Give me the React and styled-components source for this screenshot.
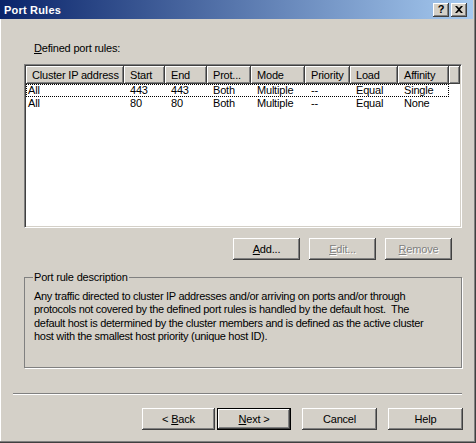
import React from 'react';
import styled, { createGlobalStyle } from 'styled-components';

const GlobalStyle = createGlobalStyle`
  html, body {
    margin: 0;
    padding: 0;
    background: #d4d0c8;
  }
  body {
    font-family: "Liberation Sans", Arial, sans-serif;
    font-size: 11px;
    color: #000;
  }
`;

// Window chrome
const Window = styled.div`
  width: 476px;
  height: 443px;
  box-sizing: border-box;
  padding: 0 3px 2px 0;
  background: #d4d0c8;
  box-shadow: inset -1px -1px #404040, inset -2px -2px #808080, inset 1px 0 #ffffff;
  display: flex;
  flex-direction: column;
`;

const TitleBar = styled.div`
  height: 19px;
  flex-shrink: 0;
  display: flex;
  align-items: center;
  padding: 0 6px 0 4px;
  background: linear-gradient(to right, #0a246a, #a6caf0);
`;

const Title = styled.div`
  flex: 1;
  color: #fff;
  font-weight: bold;
  font-size: 11px;
  letter-spacing: 0.2px;
`;

const CaptionButton = styled.div`
  width: 16px;
  height: 14px;
  box-sizing: border-box;
  margin-left: ${p => (p.$gap ? '2px' : '0')};
  background: #d4d0c8;
  box-shadow: inset -1px -1px #404040, inset 1px 1px #ffffff, inset -2px -2px #808080;
  display: flex;
  align-items: center;
  justify-content: center;
  font-weight: bold;
  font-size: 11px;
  line-height: 1;
  color: #000;
`;

// Dialog body
const Content = styled.div`
  padding: 23px 11px 0 24px;
  display: flex;
  flex-direction: column;
`;

const Label = styled.div`
  line-height: 13px;
  padding-left: 10px;
  letter-spacing: -0.2px;
`;

const ListView = styled.div`
  margin-top: 9px;
  height: 164px;
  box-sizing: border-box;
  background: #fff;
  border: 1px solid;
  border-color: #808080 #ffffff #ffffff #808080;
  box-shadow: inset 1px 1px #404040, inset -1px -1px #d4d0c8;
  padding: 1px;
  overflow: hidden;
`;

const HeaderRow = styled.div`
  display: flex;
  height: 18px;
`;

const HeaderCell = styled.div`
  width: ${p => p.$w}px;
  flex-shrink: 0;
  flex-grow: ${p => (p.$fill ? 1 : 0)};
  box-sizing: border-box;
  padding-left: 6px;
  line-height: 18px;
  white-space: nowrap;
  overflow: hidden;
  letter-spacing: -0.2px;
  background: #d4d0c8;
  box-shadow: inset -1px -1px #404040, inset 1px 1px #ffffff, inset -2px -2px #808080;
`;

const Row = styled.div`
  display: flex;
  width: 423px;
  height: 13px;
  box-sizing: border-box;
  outline: ${p => (p.$focus ? '1px dotted #000' : 'none')};
  outline-offset: -1px;
`;

const Cell = styled.div`
  width: ${p => p.$w}px;
  flex-shrink: 0;
  box-sizing: border-box;
  padding-left: ${p => (p.$first ? 2 : 6)}px;
  line-height: 13px;
  white-space: nowrap;
  letter-spacing: -0.2px;
`;

const ButtonRow = styled.div`
  display: flex;
  justify-content: flex-end;
  gap: 9px;
  margin-top: 10px;
  padding-right: 10px;
`;

const PushButton = styled.button`
  width: ${p => p.$w}px;
  height: 22px;
  margin: 0;
  margin-left: ${p => p.$ml || 0}px;
  padding: 0;
  box-sizing: border-box;
  font-family: "Liberation Sans", Arial, sans-serif;
  font-size: 11px;
  letter-spacing: -0.2px;
  color: ${p => (p.disabled ? '#808080' : '#000')};
  text-shadow: ${p => (p.disabled ? '1px 1px #ffffff' : 'none')};
  background: #d4d0c8;
  border: ${p => (p.$default ? '1px solid #000' : 'none')};
  box-shadow: inset -1px -1px #404040, inset 1px 1px #ffffff, inset -2px -2px #808080;
  cursor: default;
`;

const GroupBox = styled.fieldset`
  margin: 11px 0 0;
  padding: 6px 8px 0 9px;
  height: 97px;
  box-sizing: border-box;
  border: 1px solid #808080;
  box-shadow: 1px 1px 0 #ffffff;
`;

const Legend = styled.legend`
  padding: 0 1px;
  margin-left: -1px;
  line-height: 13px;
  letter-spacing: -0.2px;
`;

const Description = styled.p`
  margin: 0;
  line-height: 13.4px;
  white-space: nowrap;
  letter-spacing: -0.3px;
`;

// Wizard footer
const Footer = styled.div`
  padding: 0 10px 0 13px;
  display: flex;
  flex-direction: column;
`;

const Separator = styled.div`
  margin: 25px 1px 0 0;
  border-top: 1px solid #808080;
  border-bottom: 1px solid #ffffff;
`;

const FooterButtons = styled.div`
  display: flex;
  justify-content: flex-end;
  margin-top: 13px;
`;

const columns = [
  { title: 'Cluster IP address', w: 98 },
  { title: 'Start', w: 41 },
  { title: 'End', w: 42 },
  { title: 'Prot...', w: 44 },
  { title: 'Mode', w: 54 },
  { title: 'Priority', w: 45 },
  { title: 'Load', w: 48 },
  { title: 'Affinity', w: 51 },
];

const rules = [
  ['All', '443', '443', 'Both', 'Multiple', '--', 'Equal', 'Single'],
  ['All', '80', '80', 'Both', 'Multiple', '--', 'Equal', 'None'],
];

const App = () => {
  return (
    <>
      <GlobalStyle />
      <Window>
        <TitleBar>
          <Title>Port Rules</Title>
          <CaptionButton>?</CaptionButton>
          <CaptionButton $gap>
            <svg width="8" height="7" viewBox="0 0 8 7">
              <path d="M0 0h2l2 2 2-2h2L5 3.5 8 7H6L4 5 2 7H0l3-3.5z" fill="#000" />
            </svg>
          </CaptionButton>
        </TitleBar>

        <Content>
          <Label><u>D</u>efined port rules:</Label>
          <ListView>
            <HeaderRow>
              {columns.map(c => (
                <HeaderCell key={c.title} $w={c.w}>{c.title}</HeaderCell>
              ))}
              <HeaderCell $w={10} $fill />
            </HeaderRow>
            {rules.map((r, i) => (
              <Row key={i} $focus={i === 0}>
                {r.map((v, j) => (
                  <Cell key={j} $w={columns[j].w} $first={j === 0}>{v}</Cell>
                ))}
              </Row>
            ))}
          </ListView>

          <ButtonRow>
            <PushButton $w={67}><u>A</u>dd...</PushButton>
            <PushButton $w={67} disabled><u>E</u>dit...</PushButton>
            <PushButton $w={67} disabled><u>R</u>emove</PushButton>
          </ButtonRow>

          <GroupBox>
            <Legend>Port rule description</Legend>
            <Description>
              Any traffic directed to cluster IP addresses and/or arriving on ports and/or through<br />
              protocols not covered by the defined port rules is handled by the default host.&nbsp; The<br />
              default host is determined by the cluster members and is defined as the active cluster<br />
              host with the smallest host priority (unique host ID).
            </Description>
          </GroupBox>
        </Content>

        <Footer>
          <Separator />
          <FooterButtons>
            <PushButton $w={73}>&lt; <u>B</u>ack</PushButton>
            <PushButton $w={74} $ml={2} $default><u>N</u>ext &gt;</PushButton>
            <PushButton $w={75} $ml={11}>Cancel</PushButton>
            <PushButton $w={75} $ml={11}>Help</PushButton>
          </FooterButtons>
        </Footer>
      </Window>
    </>
  );
};

export default App;
